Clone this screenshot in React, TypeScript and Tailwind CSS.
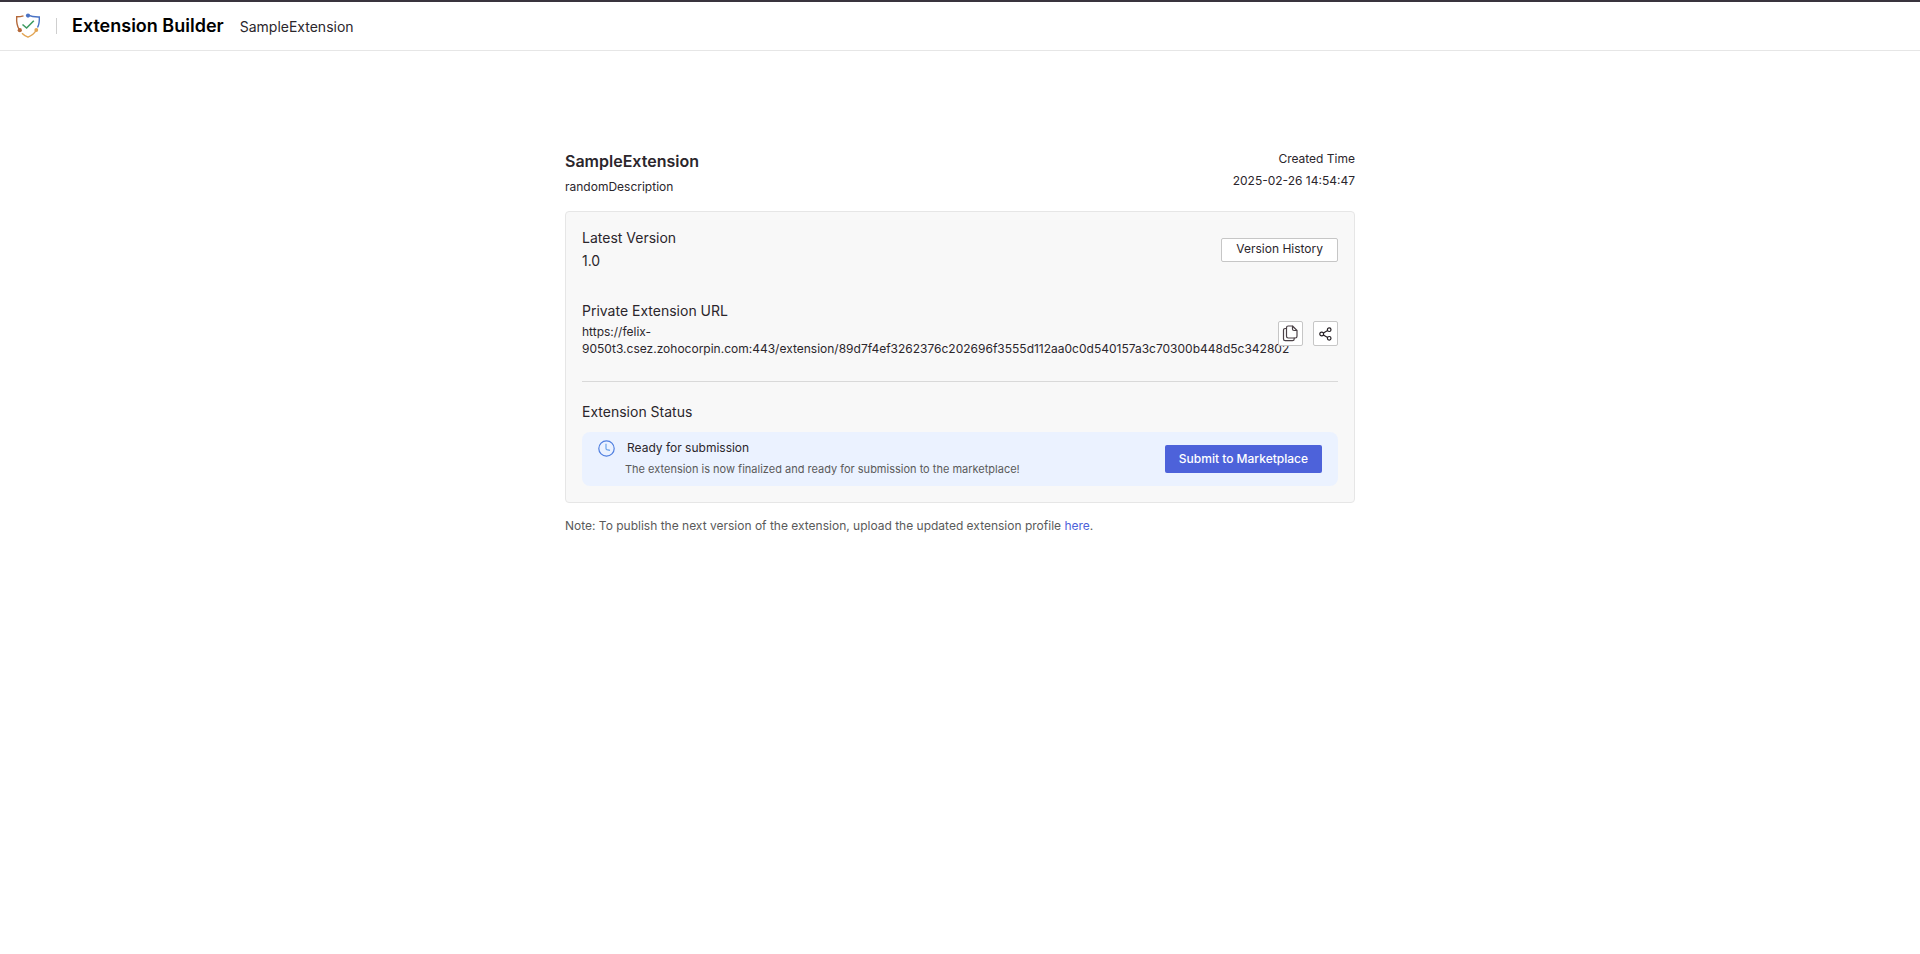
import React from "react";

const EXTENSION_URL =
  "https://felix-9050t3.csez.zohocorpin.com:443/extension/89d7f4ef3262376c202696f3555d112aa0c0d540157a3c70300b448d5c342802";

function ShieldLogo() {
  return (
    <svg width="26" height="26" viewBox="0 0 26 26" fill="none" strokeWidth="1.4" aria-hidden="true">
      <path d="M8.500 2.800C6.500 3.400 4.200 3.700 1.700 3.700C1.400 8.500 1.800 12.800 4.300 16.500" stroke="#b5693a" />
      <path d="M13 2.200C16 3.500 20 4.100 24.300 4C24.500 8 24.200 11.500 22.500 14.500" stroke="#4a72c4" />
      <path d="M7 20.200C8.700 22 10.800 23.200 13 24.200C16.800 22.600 19.600 20.200 21.300 17" stroke="#e2a452" />
      <circle cx="13" cy="2.600" r="2.100" fill="#4a72c4" />
      <circle cx="4.800" cy="17.200" r="2.100" fill="#b5693a" />
      <circle cx="21.300" cy="17" r="1.900" fill="#e2a452" />
      <path d="M7.500 11.500L11.600 15L18.800 7.800" stroke="#3c9a5f" strokeWidth="1.600" />
    </svg>
  );
}

function CopyIcon() {
  return (
    <svg width="17" height="17" viewBox="0 0 17 17" fill="none" stroke="#4a4146" strokeWidth="1.200" strokeLinejoin="round" strokeLinecap="round" aria-hidden="true">
      <path d="M10.500 1H6.200Q4.500 1 4.500 2.700V11.300Q4.500 13 6.200 13H13.300Q15 13 15 11.300V5.500L10.500 1V4Q10.500 5.500 12 5.500H15" />
      <path d="M4.500 3.500H3.200Q1.500 3.500 1.500 5.200V14Q1.500 15.700 3.200 15.700H10.500Q12.200 15.700 12.200 14V13" />
    </svg>
  );
}

function ShareIcon() {
  return (
    <svg width="13" height="14" viewBox="0 0 13 14" fill="none" stroke="#231d22" strokeWidth="1.200" aria-hidden="true">
      <circle cx="2.700" cy="7" r="1.900" />
      <circle cx="10.200" cy="2.700" r="1.800" />
      <circle cx="10.200" cy="11.300" r="1.800" />
      <path d="M4.400 6L8.600 3.600M4.400 8L8.600 10.400" />
    </svg>
  );
}

function ClockIcon() {
  return (
    <svg width="17" height="17" viewBox="0 0 17 17" fill="none" stroke="#4f7fe0" strokeWidth="1.200" aria-hidden="true">
      <circle cx="8.500" cy="8.500" r="7.700" />
      <path d="M8 3.800V8.500Q8 9.300 8.800 9.600L12 10.400" stroke="#6ba3ea" />
    </svg>
  );
}

export default function App() {
  return (
    <div className="min-h-screen border-t-2 border-[#39343e] bg-white font-['Inter','Liberation_Sans',sans-serif] text-[#2b262c]">
      <header className="flex h-[49px] items-center border-b border-[#e6e6e6] px-[15px]">
        <ShieldLogo />
        <div className="ml-[15px] h-4 w-px bg-[#cfcfcf]" />
        <h1 className="ml-[15px] text-lg font-semibold text-black">Extension Builder</h1>
        <span className="ml-4 pt-px text-sm">SampleExtension</span>
      </header>

      <main className="mx-auto mt-[100px] max-w-[790px]">
        <div className="flex justify-between pb-4">
          <div>
            <h2 className="text-base leading-5 font-semibold">SampleExtension</h2>
            <p className="mt-2 text-xs leading-4">randomDescription</p>
          </div>
          <div className="-mt-[3px] text-right text-xs leading-[22px]">
            <p>Created Time</p>
            <p>2025-02-26 14:54:47</p>
          </div>
        </div>

        <section className="rounded border border-[#e6e6e6] bg-[#f8f8f8] p-4">
          <div className="flex items-center justify-between">
            <div className="text-sm">
              <h3 className="leading-5">Latest Version</h3>
              <p className="mt-0.5 leading-[22px]">1.0</p>
            </div>
            <button type="button" className="h-6 rounded-xs border border-[#c6c6c6] bg-white px-[14px] pb-0.5 text-xs leading-[20px]">
              Version History
            </button>
          </div>

          <div className="mt-7 flex items-end justify-between border-b border-[#d9d9d9] pb-6">
            <div className="min-w-0 flex-1">
              <h3 className="text-sm leading-[22px]">Private Extension URL</h3>
              <p className="pt-px text-xs leading-[17px]">{EXTENSION_URL}</p>
            </div>
            <div className="relative mb-[11px] flex gap-[10px] pl-3">
              <button type="button" aria-label="Copy URL" className="flex size-[25px] items-center justify-center rounded-xs border border-[#c6c6c6] bg-white">
                <CopyIcon />
              </button>
              <button type="button" aria-label="Share URL" className="flex size-[25px] items-center justify-center rounded-xs border border-[#c6c6c6] bg-white">
                <ShareIcon />
              </button>
            </div>
          </div>

          <h3 className="mt-5 text-sm leading-5">Extension Status</h3>
          <div className="mt-[10px] flex items-center justify-between rounded-lg bg-[#ebf2ff] px-4 py-[5px]">
            <div>
              <div className="flex items-center gap-3">
                <ClockIcon />
                <p className="text-xs leading-[22px]">Ready for submission</p>
              </div>
              <p className="mb-0.5 ml-[27px] text-[11px] leading-5 text-[#5a5a5a]">
                The extension is now finalized and ready for submission to the marketplace!
              </p>
            </div>
            <button type="button" className="h-7 rounded-xs bg-[#4d62da] px-[14px] text-xs font-medium text-white">
              Submit to Marketplace
            </button>
          </div>
        </section>

        <p className="mt-[14px] text-xs leading-[18px] text-[#5a5a5a]">
          Note: To publish the next version of the extension, upload the updated extension profile{" "}
          <a href="#upload" className="text-[#4d62da]">here</a>.
        </p>
      </main>
    </div>
  );
}
